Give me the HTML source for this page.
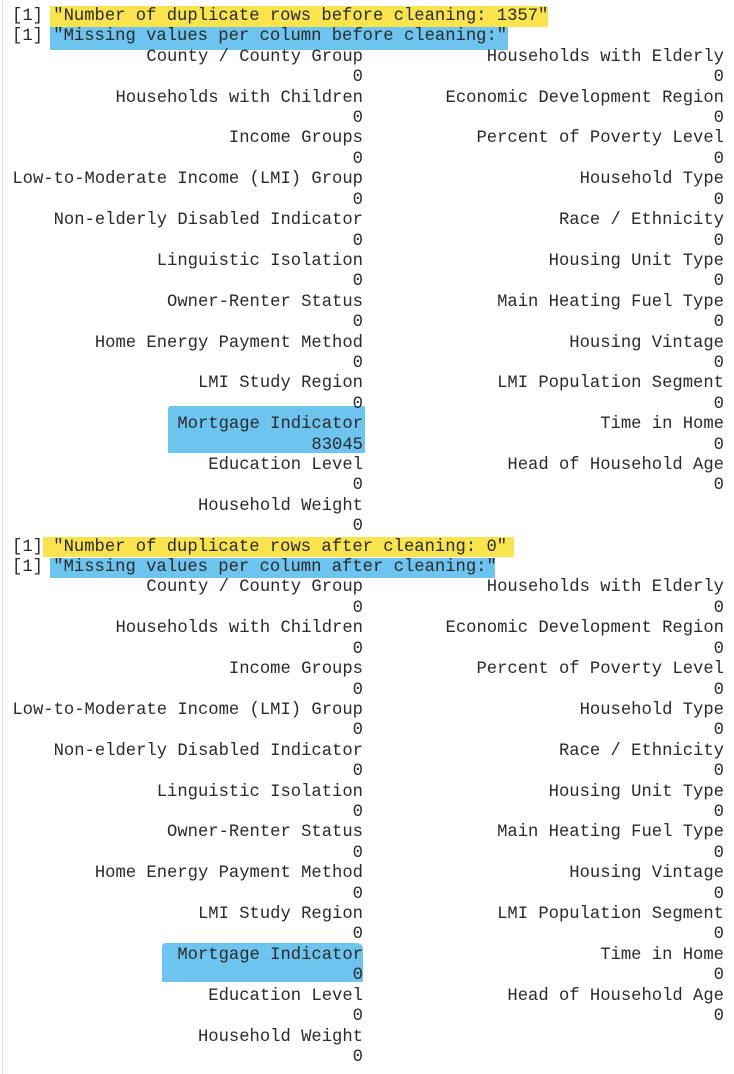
<!DOCTYPE html>
<html><head><meta charset="utf-8"><style>
html,body{margin:0;padding:0;background:#fff;width:734px;height:1074px;overflow:hidden}
body{position:relative;font-family:"Liberation Mono",monospace;font-size:17.2px;color:#2a2a2a}
.bar{position:absolute;left:2px;top:0;width:1px;height:1074px;background:#ddd}
.h{position:absolute}
.y{background:#fae44d}
.b{background:#6cc4ef}
.w{position:absolute;left:0;top:2px;width:734px;height:1072px}
.ln{position:absolute;left:0;width:734px;height:20.41px;line-height:20.41px;white-space:pre}
.ln span{position:absolute;top:0}
.l{right:371px}
.r{right:10px}
.f{left:12px}
</style></head><body>
<div class="bar"></div>
<div class="h y" style="left:50px;top:6px;width:498px;height:21px"></div>
<div class="h b" style="left:50px;top:27px;width:458px;height:23px"></div>
<div class="h b" style="left:168px;top:406px;width:197px;height:47px;border-radius:3px 2px 1px 1px"></div>
<div class="h y" style="left:43px;top:537px;width:471px;height:20px"></div>
<div class="h b" style="left:50px;top:558px;width:445px;height:20px"></div>
<div class="h b" style="left:162px;top:943px;width:201px;height:39px;border-radius:4px 6px 1px 1px"></div>
<div class="w">
<div class="ln" style="top:5px"><span class="f">[1] "Number of duplicate rows before cleaning: 1357"</span></div>
<div class="ln" style="top:25.41px"><span class="f">[1] "Missing values per column before cleaning:"</span></div>
<div class="ln" style="top:45.82px"><span class="l">County / County Group</span><span class="r">Households with Elderly</span></div>
<div class="ln" style="top:66.23px"><span class="l">0</span><span class="r">0</span></div>
<div class="ln" style="top:86.64px"><span class="l">Households with Children</span><span class="r">Economic Development Region</span></div>
<div class="ln" style="top:107.05px"><span class="l">0</span><span class="r">0</span></div>
<div class="ln" style="top:127.46px"><span class="l">Income Groups</span><span class="r">Percent of Poverty Level</span></div>
<div class="ln" style="top:147.87px"><span class="l">0</span><span class="r">0</span></div>
<div class="ln" style="top:168.28px"><span class="l">Low-to-Moderate Income (LMI) Group</span><span class="r">Household Type</span></div>
<div class="ln" style="top:188.69px"><span class="l">0</span><span class="r">0</span></div>
<div class="ln" style="top:209.1px"><span class="l">Non-elderly Disabled Indicator</span><span class="r">Race / Ethnicity</span></div>
<div class="ln" style="top:229.51px"><span class="l">0</span><span class="r">0</span></div>
<div class="ln" style="top:249.92px"><span class="l">Linguistic Isolation</span><span class="r">Housing Unit Type</span></div>
<div class="ln" style="top:270.33px"><span class="l">0</span><span class="r">0</span></div>
<div class="ln" style="top:290.74px"><span class="l">Owner-Renter Status</span><span class="r">Main Heating Fuel Type</span></div>
<div class="ln" style="top:311.15px"><span class="l">0</span><span class="r">0</span></div>
<div class="ln" style="top:331.56px"><span class="l">Home Energy Payment Method</span><span class="r">Housing Vintage</span></div>
<div class="ln" style="top:351.97px"><span class="l">0</span><span class="r">0</span></div>
<div class="ln" style="top:372.38px"><span class="l">LMI Study Region</span><span class="r">LMI Population Segment</span></div>
<div class="ln" style="top:392.79px"><span class="l">0</span><span class="r">0</span></div>
<div class="ln" style="top:413.2px"><span class="l">Mortgage Indicator</span><span class="r">Time in Home</span></div>
<div class="ln" style="top:433.61px"><span class="l">83045</span><span class="r">0</span></div>
<div class="ln" style="top:454.02px"><span class="l">Education Level</span><span class="r">Head of Household Age</span></div>
<div class="ln" style="top:474.43px"><span class="l">0</span><span class="r">0</span></div>
<div class="ln" style="top:494.84px"><span class="l">Household Weight</span></div>
<div class="ln" style="top:515.25px"><span class="l">0</span></div>

<div class="ln" style="top:535.66px"><span class="f">[1] "Number of duplicate rows after cleaning: 0"</span></div>
<div class="ln" style="top:556.07px"><span class="f">[1] "Missing values per column after cleaning:"</span></div>
<div class="ln" style="top:576.48px"><span class="l">County / County Group</span><span class="r">Households with Elderly</span></div>
<div class="ln" style="top:596.89px"><span class="l">0</span><span class="r">0</span></div>
<div class="ln" style="top:617.3px"><span class="l">Households with Children</span><span class="r">Economic Development Region</span></div>
<div class="ln" style="top:637.71px"><span class="l">0</span><span class="r">0</span></div>
<div class="ln" style="top:658.12px"><span class="l">Income Groups</span><span class="r">Percent of Poverty Level</span></div>
<div class="ln" style="top:678.53px"><span class="l">0</span><span class="r">0</span></div>
<div class="ln" style="top:698.94px"><span class="l">Low-to-Moderate Income (LMI) Group</span><span class="r">Household Type</span></div>
<div class="ln" style="top:719.35px"><span class="l">0</span><span class="r">0</span></div>
<div class="ln" style="top:739.76px"><span class="l">Non-elderly Disabled Indicator</span><span class="r">Race / Ethnicity</span></div>
<div class="ln" style="top:760.17px"><span class="l">0</span><span class="r">0</span></div>
<div class="ln" style="top:780.58px"><span class="l">Linguistic Isolation</span><span class="r">Housing Unit Type</span></div>
<div class="ln" style="top:800.99px"><span class="l">0</span><span class="r">0</span></div>
<div class="ln" style="top:821.4px"><span class="l">Owner-Renter Status</span><span class="r">Main Heating Fuel Type</span></div>
<div class="ln" style="top:841.81px"><span class="l">0</span><span class="r">0</span></div>
<div class="ln" style="top:862.22px"><span class="l">Home Energy Payment Method</span><span class="r">Housing Vintage</span></div>
<div class="ln" style="top:882.63px"><span class="l">0</span><span class="r">0</span></div>
<div class="ln" style="top:903.04px"><span class="l">LMI Study Region</span><span class="r">LMI Population Segment</span></div>
<div class="ln" style="top:923.45px"><span class="l">0</span><span class="r">0</span></div>
<div class="ln" style="top:943.86px"><span class="l">Mortgage Indicator</span><span class="r">Time in Home</span></div>
<div class="ln" style="top:964.27px"><span class="l">0</span><span class="r">0</span></div>
<div class="ln" style="top:984.68px"><span class="l">Education Level</span><span class="r">Head of Household Age</span></div>
<div class="ln" style="top:1005.09px"><span class="l">0</span><span class="r">0</span></div>
<div class="ln" style="top:1025.5px"><span class="l">Household Weight</span></div>
<div class="ln" style="top:1045.91px"><span class="l">0</span></div>
</div>
</body></html>
